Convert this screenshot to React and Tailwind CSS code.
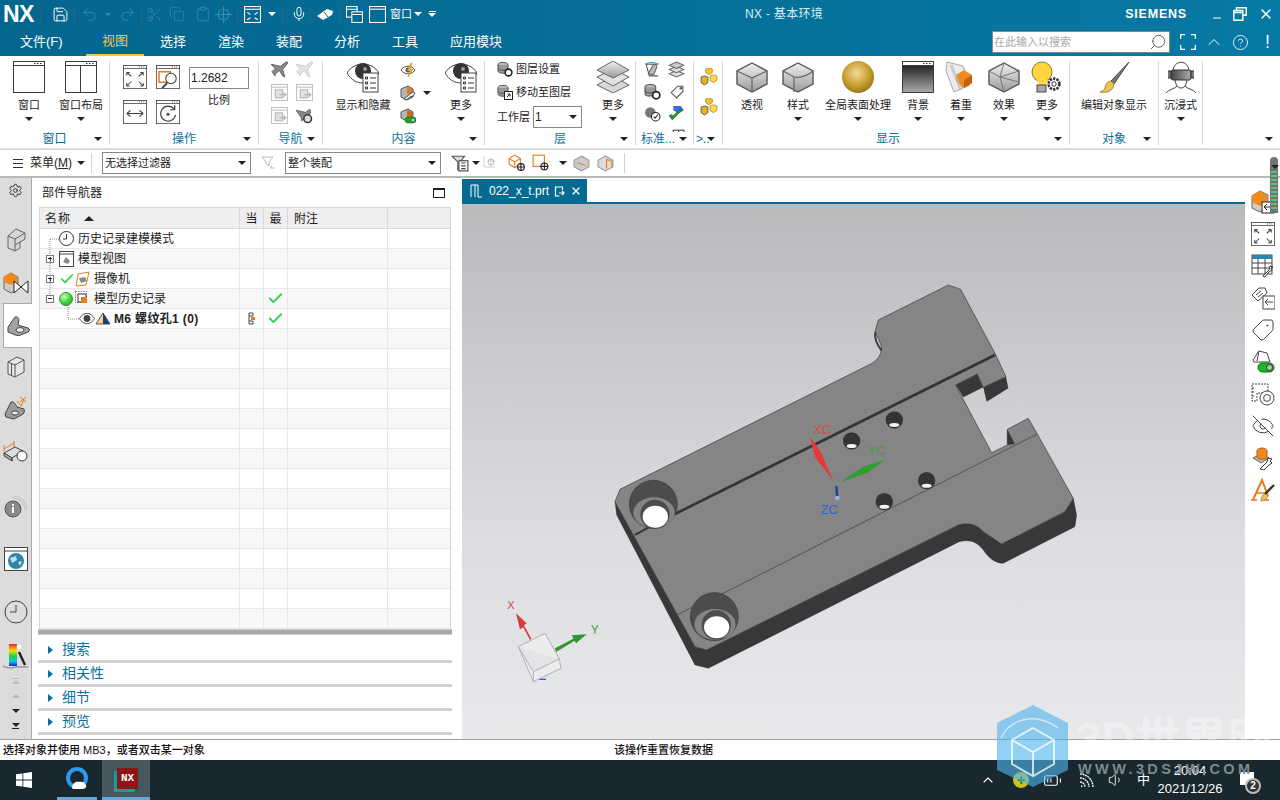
import { Check, Search, Mic, Undo2, Redo2, Save, Copy, Clipboard, Scissors, HelpCircle, ChevronUp, X, Minus, Volume1, BatteryMedium, Tag, EyeOff, Settings } from 'lucide-react'

const caret = 'w-0 h-0 border-l-[4px] border-r-[4px] border-t-[4px] border-l-transparent border-r-transparent border-t-[#222]'

function Caret({ className = '' }) {
  return <span className={`${caret} inline-block shrink-0 ${className}`} />
}

function Svg({ s = 32, vb = 32, children, className = '' }) {
  return <svg width={s} height={s} viewBox={`0 0 ${vb} ${vb}`} className={`shrink-0 ${className}`}>{children}</svg>
}

// window frame with the three dots in the title strip
function Win({ s = 32, children, fill = 'white' }) {
  return (
    <Svg s={s}>
      <rect x="0.5" y="0.5" width="31" height="31" fill={fill} stroke="#3c3c3c" />
      <rect x="0.5" y="0.5" width="31" height="4" fill="white" stroke="#3c3c3c" />
      <path d="M24 2.5h1.5M27 2.5h1.5M21 2.5h1.5" stroke="#333" />
      {children}
    </Svg>
  )
}

function Cube({ s = 32, kind = 'box' }) {
  return (
    <Svg s={s}>
      <path d="M16 2 31 10v13L16 31 1 23V10Z" fill="url(#boxGrad)" stroke="#555" strokeWidth="1.4" />
      {kind === 'box' && <path d="M1 10 16 17l15-7M16 17v14" fill="none" stroke="#666" strokeWidth="1.2" />}
      {kind === 'round' && <path d="M1 10 12 16c6 1 13-1 19-6M12 16v15" fill="none" stroke="#666" strokeWidth="1.2" />}
      {kind === 'facet' && <path d="M16 2 12 16 1 10M12 16 16 31M12 16l19 5M31 10 12 16" fill="none" stroke="#777" strokeWidth="1" />}
    </Svg>
  )
}

function EyeList({ s = 32 }) {
  return (
    <Svg s={s}>
      <path d="M0 12C7 0 25 0 32 12c-4 7-10 10-16 10S4 19 0 12Z" fill="white" stroke="#444" />
      <circle cx="16" cy="10" r="8" fill="#333" />
      <circle cx="18" cy="8" r="2" fill="#999" />
      <rect x="16" y="12" width="15" height="19" fill="white" stroke="#444" />
      <path d="M18.5 16h2v2h-2zM18.5 21h2v2h-2zM18.5 26h2v2h-2z" fill="none" stroke="#333" />
      <path d="M23 17h6M23 22h6M23 27h6" stroke="#333" />
    </Svg>
  )
}

function Layers({ s = 32 }) {
  return (
    <Svg s={s}>
      <path d="M16 15 32 24 16 32 0 24Z" fill="#d8d8d8" stroke="#666" />
      <path d="M16 8 32 16 16 25 0 16Z" fill="#e2e2e2" stroke="#666" />
      <path d="M16 0 32 9 16 17 0 9Z" fill="url(#boxGrad)" stroke="#666" />
    </Svg>
  )
}

function Stack({ s = 16, badge }) {
  return (
    <Svg s={s} vb={16}>
      <ellipse cx="6" cy="4" rx="5" ry="2.6" fill="#bbb" stroke="#555" />
      <path d="M1 4v6c0 3 10 3 10 0V4" fill="#999" stroke="#555" />
      <path d="M1 7c0 3 10 3 10 0" fill="none" stroke="#555" />
      {badge === 'gear' && <circle cx="11.5" cy="11.5" r="3.4" fill="white" stroke="#222" strokeWidth="1.6" />}
      {badge === 'move' && <g><rect x="7.5" y="7.5" width="8" height="8" fill="white" stroke="#222" /><path d="M10 13l3-3M10.5 10H13v2.5" fill="none" stroke="#222" /></g>}
    </Svg>
  )
}

function GoldCubes() {
  return (
    <Svg s={18} vb={16}>
      <path d="M5 1l3-1 3 1v3l-3 2-3-2z" fill="#f6c32c" stroke="#a27a10" strokeWidth=".6" />
      <path d="M9 7l3-1 3 1v4l-3 2-3-2z" fill="#ffd84f" stroke="#a27a10" strokeWidth=".6" />
      <path d="M1 8l3-1 3 1v5l-3 2-3-2z" fill="#e9b21c" stroke="#555" strokeWidth=".8" />
    </Svg>
  )
}

function Plane({ s = 17, gray }) {
  return (
    <Svg s={s} vb={16}>
      <path d="M0 3 9 5l5-4c2-1 2 1 1 2l-4 5 2 7-2-1-3-5-4 3v2l-1-1-2-3 3-3Z" fill={gray ? '#e4e4e4' : '#8a8a8a'} stroke={gray ? '#c0c0c0' : '#444'} strokeWidth=".7" />
    </Svg>
  )
}

// greyed navigation tools: a small window with a mark in it
function Dim({ s = 17 }) {
  return (
    <Svg s={s} vb={16}>
      <rect x=".5" y=".5" width="15" height="15" fill="white" stroke="#c0c0c0" />
      <path d="M.5 3h15" stroke="#c0c0c0" />
      <rect x="4" y="5.500" width="7" height="7.500" fill="#e2e2e2" stroke="#b4b4b4" />
      <path d="M8 10h6M12 8l2 2-2 2" fill="none" stroke="#b4b4b4" />
    </Svg>
  )
}

// ribbon button with the icon over the label
function BigBtn({ w, icon, label, drop = true }) {
  return (
    <div className={`flex flex-col items-center shrink-0 ${w}`}>
      <div className="h-8 flex items-center justify-center">{icon}</div>
      <div className="mt-[4px] h-4 leading-4 text-[11px] text-[#222] whitespace-nowrap">{label}</div>
      {drop && <Caret className="mt-[4px]" />}
    </div>
  )
}

function Group({ w, label, children, line = true, drop = true, className = '', labelClass = 'text-center', dropClass = 'right-[7px]' }) {
  return (
    <div className={`shrink-0 h-[84px] mt-[5px] flex flex-col ${w} ${line ? 'border-r border-[#d8d8d8]' : ''}`}>
      <div className={`h-[71px] flex overflow-hidden ${className}`}>{children}</div>
      <div className="h-[13px] relative">
        <div className={`absolute left-0 right-0 top-0 text-[12px] leading-[15px] text-[#0a6f9b] whitespace-nowrap ${labelClass}`}>{label}</div>
        {drop && <Caret className={`absolute top-[5px] ${dropClass}`} />}
      </div>
    </div>
  )
}

function Ribbon() {
  return (
    <div className="h-[94px] bg-white flex border-b-2 border-[#dcdcdc] shrink-0">
      <Group w="w-[110px]" label="窗口" className="pl-[3px]">
        <BigBtn w="w-[52px]" label="窗口" icon={<Win />} />
        <BigBtn w="w-[52px]" label="窗口布局" icon={<Win><path d="M15.5 4v28" stroke="#3c3c3c" /></Win>} />
      </Group>
      <Group w="w-[149px]" label="操作" className="pl-[13px] pt-[4px]">
        <div className="grid grid-cols-[24px_24px] gap-x-[9px] gap-y-[11px] content-start">
          <Win s={24}><path d="M5 10l6 5M27 10l-6 5M5 28l6-6M27 28l-6-6M5 10h4M5 10v4M27 10h-4M27 10v4M5 28h4M5 28v-4M27 28h-4M27 28v-4" stroke="#444" strokeWidth="1.4" fill="none" /></Win>
          <Win s={24}><rect x="4" y="9" width="15" height="14" fill="none" stroke="#e87b1c" strokeWidth="2" /><circle cx="20" cy="18" r="7" fill="white" stroke="#444" strokeWidth="1.4" /><path d="M15 24l-7 7" stroke="#444" strokeWidth="2.4" /></Win>
          <Win s={24}><path d="M5 18h22M5 18l5-4M5 18l5 4M27 18l-5-4M27 18l-5 4" stroke="#444" strokeWidth="1.4" fill="none" /></Win>
          <Win s={24}><path d="M24 12a10 10 0 1 0 2 8" stroke="#444" strokeWidth="1.6" fill="none" /><path d="M25 7v6h-6" stroke="#444" strokeWidth="1.6" fill="none" /><circle cx="16" cy="19" r="2" fill="#444" /></Win>
        </div>
        <div className="ml-[9px] flex flex-col items-center w-[60px]">
          <div className="w-[60px] h-[22px] mt-[2px] border border-[#888] text-[12px] leading-[20px] pl-[1px] text-[#222]">1.2682</div>
          <div className="mt-[3px] text-[11px] h-4 leading-4 text-[#222]">比例</div>
        </div>
      </Group>
      <Group w="w-[64px]" label="导航" className="pl-[12px]">
        <div className="grid grid-cols-[17px_17px] gap-x-[8px] gap-y-[6px] content-start">
          <Plane />
          <Plane gray />
          <Dim />
          <Dim />
          <Dim />
          <Svg s={17} vb={16}><path d="M0 3 9 5l4-3 1 3-2 3 1 6-4-3-4 2v-3Z" fill="#888" stroke="#444" strokeWidth=".6" /><circle cx="11" cy="11" r="3.6" fill="#ddd" stroke="#333" strokeWidth="1.4" /></Svg>
        </div>
      </Group>
      <Group w="w-[162px]" label="内容" className="pl-[10px]">
        <BigBtn w="w-[60px]" label="显示和隐藏" drop={false} icon={<EyeList />} />
        <div className="ml-[7px] w-[41px] h-[64px] flex items-center">
          <div className="flex flex-col gap-[7px] w-[16px]">
            <Svg s={16} vb={16}><path d="M1 8c3-5 11-5 14 0-3 5-11 5-14 0Z" fill="white" stroke="#555" /><circle cx="8" cy="8" r="2.5" fill="#555" /><path d="M11 1 7 9h3l-2 6 5-8h-3l2-6Z" fill="#f2b91f" stroke="#b57b10" strokeWidth=".5" /></Svg>
            <Svg s={16} vb={16}><path d="M1 4l7-3 5 3v8l-6 3-6-3Z" fill="#b5b5b5" stroke="#555" /><path d="M7 2l5 2v4l-5 1Z" fill="#e87b1c" /><path d="M4 14l6-5 3-2 2 1-2 3-3 1-4 3Z" fill="white" stroke="#333" strokeWidth=".9" /></Svg>
            <Svg s={16} vb={16}><path d="M1 4l7-3 5 3v6l-6 3-6-3Z" fill="#b5b5b5" stroke="#555" /><path d="M7 2l5 2v5l-5 1Z" fill="#d8641a" /><rect x="5" y="9" width="11" height="6" rx="3" fill="#17a81f" stroke="#0a5c10" strokeWidth=".5" /><circle cx="13" cy="12" r="1.8" fill="#ccc" stroke="#333" strokeWidth=".4" /></Svg>
          </div>
          <Caret className="ml-[7px]" />
        </div>
        <BigBtn w="w-[40px]" label="更多" icon={<EyeList />} />
      </Group>
      <Group w="w-[151px]" label="层" className="pl-[12px]">
        <div className="w-[96px] text-[11px] text-[#222] flex flex-col">
          <div className="flex items-center gap-[3px] h-[16px]"><Stack badge="gear" /><span className="whitespace-nowrap">图层设置</span></div>
          <div className="flex items-center gap-[3px] h-[16px] mt-[7px]"><Stack badge="move" /><span className="whitespace-nowrap">移动至图层</span></div>
          <div className="flex items-center h-[22px] mt-[6px]">
            <span className="whitespace-nowrap">工作层</span>
            <div className="ml-[3px] w-[49px] h-[22px] border border-[#888] flex items-center justify-between pl-[1px] pr-[4px] text-[12px]">1<Caret className="border-l-[3.5px] border-r-[3.5px]" /></div>
          </div>
        </div>
        <BigBtn w="w-[40px]" label="更多" icon={<Layers />} />
      </Group>
      <Group w="w-[58px]" label="标准..." className="pl-[8px]" labelClass="text-left pl-[5px]" dropClass="right-[6px]">
        <div className="grid grid-cols-[17px_17px] gap-x-[7px] gap-y-[5px] content-start">
          <Svg s={17} vb={16}><path d="M2 3h11M2 3l3 11h8" fill="none" stroke="#555" /><path d="M4 12 9 3c2 0 3 1 3 3l-3 7Z" fill="#bbb" stroke="#666" /><path d="M1 3c4-2 8-2 13 0" stroke="#2aa0b8" fill="none" /></Svg>
          <Svg s={17} vb={16}><path d="M8 9l7 3-7 3-7-3Z" fill="#ddd" stroke="#666" /><path d="M8 5l7 3-7 3-7-3Z" fill="#ddd" stroke="#666" /><path d="M8 1l7 3-7 3-7-3Z" fill="#ccc" stroke="#666" /></Svg>
          <Stack s={17} badge="gear" />
          <Svg s={17} vb={16}><path d="M3 7l6-6h5v5l-6 6-5-5Z" fill="white" stroke="#555" transform="translate(0 2)" /><circle cx="12" cy="5" r="1.2" fill="#555" /></Svg>
          <Svg s={17} vb={16}><ellipse cx="6" cy="7" rx="5" ry="5" fill="#777" /><circle cx="11" cy="11" r="4" fill="white" stroke="#222" /><path d="M9 11l1.5 1.5L13 9" stroke="#222" fill="none" /></Svg>
          <Svg s={17} vb={16}><path d="M5 1h7l3 4-5 3-5-3Z" fill="#4266e0" /><path d="M1 10l3 4 9-9-2-1-6 6-2-1Z" fill="#1f9a2a" stroke="#125c18" strokeWidth=".5" /></Svg>
          <Svg s={17} vb={16}><path d="M2 10l6-5 6 5v6H2Z" fill="#aaa" stroke="#666" /></Svg>
          <Svg s={17} vb={16}><rect x="5" y="3" width="10" height="13" fill="white" stroke="#444" /><path d="M5 8h10M10 3v13" stroke="#444" /></Svg>
        </div>
      </Group>
      <Group w="w-[29px]" label=">.." className="pl-[6px] pt-[7px]" labelClass="text-left pl-[2px]" dropClass="right-[7px]">
        <div className="flex flex-col gap-[12px]">
          <GoldCubes />
          <GoldCubes />
        </div>
      </Group>
      <Group w="w-[347px]" label="显示" className="pl-[6px]" labelClass="text-left pl-[153px]">
        <BigBtn w="w-[46px]" label="透视" drop={false} icon={<Cube />} />
        <BigBtn w="w-[46px]" label="样式" icon={<Cube kind="round" />} />
        <BigBtn w="w-[74px]" label="全局表面处理" icon={<span className="w-8 h-8 rounded-full bg-[radial-gradient(circle_at_45%_38%,#f2dc93,#c59a2c_50%,#6d5210_100%)]" />} />
        <BigBtn w="w-[46px]" label="背景" icon={<Win fill="url(#blackGrad)" />} />
        <BigBtn w="w-[40px]" label="着重" icon={
          <Svg>
            <path d="M2 1 18 5l7 19-16 7L1 10Z" fill="#ececec" stroke="#aaa" />
            <path d="M11 14 19 9l8 5v8l-9 5-7-7Z" fill="#f08a1e" />
            <path d="M19 27v-8l8-5v8Z" fill="#c85f0c" />
            <path d="M6 4 16 29" stroke="#bbb" strokeWidth="3" opacity=".7" />
          </Svg>
        } />
        <BigBtn w="w-[46px]" label="效果" icon={<Cube kind="facet" />} />
        <BigBtn w="w-[40px]" label="更多" icon={
          <Svg>
            <circle cx="11" cy="11" r="10" fill="#fbd63e" stroke="#8a7a30" />
            <path d="M6 19c1 3 2 3 2 5h7c0-2 1-2 2-5Z" fill="#fbd63e" />
            <rect x="6" y="24" width="9" height="7" fill="#aaa" stroke="#444" />
            <circle cx="23" cy="23" r="5.4" fill="white" stroke="#333" strokeWidth="2.6" strokeDasharray="2.4 1" />
            <circle cx="23" cy="23" r="2.2" fill="white" stroke="#333" />
          </Svg>
        } />
      </Group>
      <Group w="w-[89px]" label="对象">
        <BigBtn w="w-[88px]" label="编辑对象显示" drop={false} icon={
          <Svg>
            <path d="M31 1 13 20l3 3Z" fill="#777" stroke="#333" strokeWidth=".8" />
            <path d="M13 20c-5 1-6 5-6 7 0 2-3 3-5 4 6 1 13 0 14-8Z" fill="#e9c35a" stroke="#96741b" strokeWidth=".8" />
          </Svg>
        } />
      </Group>
      <Group w="w-[44px]" label="" drop={false}>
        <BigBtn w="w-[43px]" label="沉浸式" icon={
          <Svg>
            <path d="M8 11c0-13 16-13 16 0" fill="white" stroke="#444" />
            <rect x="6" y="9" width="20" height="10" rx="2" fill="url(#visorGrad)" stroke="#333" />
            <path d="M3 10h3v7H3M29 10h-3v7h3" fill="#777" stroke="#333" />
            <path d="M10 19c1 6 3 8 6 8s5-2 6-8M12 25c-2 3-8 3-11 7M20 25c2 3 8 3 11 7" fill="none" stroke="#444" />
          </Svg>
        } />
      </Group>
      <Group w="w-[77px]" label="" line={false}>
        <span />
      </Group>
    </div>
  )
}

function QatSep() {
  return <span className="block w-px h-[20px] bg-[#35617a] shrink-0" />
}

function TitleBar() {
  const dim = 'text-[#3f8aa8] shrink-0'
  return (
    <div className="h-[28px] flex items-center text-white shrink-0">
      <div className="w-[745px] shrink-0 flex items-center h-full">
        <span className="ml-[3px] w-[35px] font-bold text-[23px] leading-[28px] tracking-[-0.5px]">NX</span>
        <span className="ml-[3px] mr-[10px]"><QatSep /></span>
        <Save size={17} strokeWidth={1.4} className="shrink-0" />
        <span className="ml-[5px] mr-[6px]"><QatSep /></span>
        <Undo2 size={17} strokeWidth={1.3} className={dim} />
        <span className="ml-[7px] w-0 h-0 border-l-[3px] border-r-[3px] border-t-[3px] border-l-transparent border-r-transparent border-t-[#3f8aa8]" />
        <Redo2 size={17} strokeWidth={1.3} className={`ml-[8px] ${dim}`} />
        <span className="ml-[5px] mr-[4px]"><QatSep /></span>
        <Scissors size={17} strokeWidth={1.2} className={dim} />
        <Copy size={16} strokeWidth={1.2} className={`ml-[6px] ${dim}`} />
        <Clipboard size={16} strokeWidth={1.2} className={`ml-[10px] ${dim}`} />
        <svg width="17" height="17" viewBox="0 0 16 16" className={`ml-[4px] ${dim}`}><circle cx="8" cy="8" r="5" fill="none" stroke="currentColor" /><path d="M8 0v16M0 8h16" stroke="currentColor" /></svg>
        <span className="ml-[5px] mr-[6px]"><QatSep /></span>
        <svg width="17" height="17" viewBox="0 0 16 16" className="shrink-0"><rect x=".5" y=".5" width="15" height="15" fill="none" stroke="white" /><path d="M.5 3h15M3 6l3 2M13 6l-3 2M3 13l3-2M13 13l-3-2" stroke="white" /></svg>
        <Caret className="ml-[7px] border-t-white" />
        <span className="ml-[6px] mr-[8px]"><QatSep /></span>
        <Mic size={16} strokeWidth={1.5} className="shrink-0" />
        <span className="ml-[3px] mr-[5px]"><QatSep /></span>
        <svg width="18" height="14" viewBox="0 0 18 14" className="shrink-0"><path d="M1 9l10-7 6 2-1 4-9 5Z" fill="white" /><path d="M8 5l4 5" stroke="#056b92" /></svg>
        <span className="ml-[5px] mr-[6px]"><QatSep /></span>
        <svg width="17" height="17" viewBox="0 0 16 16" className="shrink-0"><rect x=".5" y=".5" width="10" height="10" fill="#056b92" stroke="white" /><rect x="5.5" y="5.5" width="10" height="10" fill="#056b92" stroke="white" /><path d="M.5 3h10M5.5 8h10" stroke="white" /></svg>
        <svg width="17" height="17" viewBox="0 0 16 16" className="ml-[6px] shrink-0"><rect x=".5" y=".5" width="15" height="15" fill="none" stroke="white" /><path d="M.5 3h15" stroke="white" /></svg>
        <span className="ml-[4px] text-[11px]">窗口</span>
        <Caret className="ml-[2px] border-t-white" />
        <span className="ml-[6px] flex flex-col items-center gap-[1px]"><span className="w-[7px] h-px bg-white" /><Caret className="border-t-white" /></span>
      </div>
      <span className="text-[12px] tracking-[0.3px] text-[#d9ecf4] whitespace-nowrap">NX - 基本环境</span>
      <span className="ml-auto mr-[24px] font-bold text-[12.5px] tracking-[0.8px] [font-family:'Liberation_Sans',sans-serif]">SIEMENS</span>
      <Minus size={12} strokeWidth={2.2} className="mr-[10px] mt-[8px]" />
      <svg width="14" height="14" viewBox="0 0 14 14" className="mr-[11px]"><path d="M3.5 3V.8h9.7v7.5h-3M.8 3.5h9v9.7H.8zM.8 5.5h9" fill="none" stroke="white" strokeWidth="1.4" /></svg>
      <X size={16} strokeWidth={2} className="mr-[6px]" />
    </div>
  )
}

function TabRow() {
  const tabs = ['选择', '渲染', '装配', '分析', '工具']
  return (
    <div className="h-[28px] flex items-center text-white text-[13px] shrink-0">
      <span className="w-[86px] pl-[20px] whitespace-nowrap">文件(F)</span>
      <span className="w-[58px] h-full flex items-center justify-center text-[#f4c64e] border-b-2 border-[#f4c64e]">视图</span>
      {tabs.map(t => <span key={t} className="w-[58px] text-center">{t}</span>)}
      <span className="ml-[16px] whitespace-nowrap">应用模块</span>
      <div className="ml-auto w-[178px] h-[22px] bg-white border border-[#888] flex items-center justify-between pr-[2px]">
        <span className="text-[11px] text-[#a8a8a8] leading-[20px] pl-[1px]">在此输入以搜索</span>
        <Search size={18} strokeWidth={1.2} className="text-[#555] -scale-x-100" />
      </div>
      <svg width="16" height="16" viewBox="0 0 16 16" className="ml-[10px]"><path d="M.7 5V.7H5M11 .7h4.3V5M.7 11v4.3H5M11 15.3h4.3V11" fill="none" stroke="white" strokeWidth="1.2" /></svg>
      <ChevronUp size={20} strokeWidth={1.2} className="ml-[8px]" />
      <HelpCircle size={17} strokeWidth={1.2} className="ml-[8px]" />
      <span className="ml-[16px] mr-[10px] text-[18px] leading-none">!</span>
    </div>
  )
}

function SelectionBar() {
  return (
    <div className="h-[28px] bg-white border-b-2 border-[#b8b8b8] flex items-center shrink-0 text-[11px] text-[#222] relative">
      <span className="ml-[13px] w-[10px] flex flex-col gap-[3px]"><i className="h-px bg-[#333]" /><i className="h-px bg-[#333]" /><i className="h-px bg-[#333]" /></span>
      <span className="ml-[7px] whitespace-nowrap text-[12px]">菜单(<u>M</u>)</span>
      <Caret className="ml-[5px]" />
      <span className="ml-[6px] w-px h-[20px] bg-[#d0d0d0]" />
      <div className="ml-[10px] w-[149px] h-[22px] border border-[#888] flex items-center justify-between pl-[2px] pr-[4px]">无选择过滤器<Caret /></div>
      <svg width="16" height="16" viewBox="0 0 16 16" className="ml-[10px]"><path d="M1 2h11L8 7v4L5 9V7ZM9 13h5M9 13l2-2" fill="none" stroke="#bbb" /></svg>
      <div className="ml-[8px] w-[156px] h-[22px] border border-[#888] flex items-center justify-between pl-[2px] pr-[4px]">整个装配<Caret /></div>
      <svg width="18" height="18" viewBox="0 0 16 16" className="ml-[10px]"><path d="M1 2h11L8 7v7H6V7Z" fill="#ddd" stroke="#555" /><rect x="7" y="6" width="8" height="9" fill="white" stroke="#444" /><path d="M9 8h4M9 10.5h4M9 13h4" stroke="#444" /></svg>
      <Caret className="ml-[3px]" />
      <svg width="16" height="16" viewBox="0 0 16 16" className="ml-[3px]"><path d="M1 1v11h11M4 6h8M8 3v8" stroke="#ccc" fill="none" /><circle cx="8" cy="7" r="3" fill="none" stroke="#bbb" /></svg>
      <svg width="18" height="18" viewBox="0 0 16 16" className="ml-[9px]"><path d="M1 4l5-3 5 3v5l-5 3-5-3Z" fill="#fff" stroke="#e87b1c" /><path d="M1 4l5 3 5-3M6 7v5" stroke="#e87b1c" fill="none" /><circle cx="11.5" cy="11.5" r="3" fill="white" stroke="#222" /><path d="M8 11.5h7M11.5 8v7" stroke="#222" /></svg>
      <svg width="18" height="18" viewBox="0 0 16 16" className="ml-[6px]"><rect x="1" y="1" width="10" height="10" fill="white" stroke="#e87b1c" /><circle cx="11" cy="11" r="3" fill="white" stroke="#222" /><path d="M7.5 11h7M11 7.5v7" stroke="#222" /></svg>
      <Caret className="ml-[9px]" />
      <svg width="17" height="17" viewBox="0 0 16 16" className="ml-[6px]"><path d="M8 1l7 4v6l-7 4-7-4V5Z" fill="#ccc" stroke="#999" /><path d="M4 7l8 3" stroke="#e87b1c" /></svg>
      <svg width="17" height="17" viewBox="0 0 16 16" className="ml-[7px]"><path d="M8 1l7 4v6l-7 4-7-4V5Z" fill="#ddd" stroke="#999" /><path d="M9 4v9M9 4l5 2v6" stroke="#e87b1c" fill="none" /></svg>
      <span className="ml-[10px] w-px h-[20px] bg-[#d0d0d0]" />
    </div>
  )
}

function RailBlock() {
  return (
    <svg width="22" height="24" viewBox="0 0 22 24">
      <path d="M11 1l9 4v6l-5 3v6l-5 3-7-3V8Z" fill="#d6d6d6" stroke="#666" />
      <path d="M3 8l7 3 10-6M10 11v12M10 17l5-3" fill="none" stroke="#666" />
    </svg>
  )
}

function LeftRail() {
  return (
    <div className="w-[32px] shrink-0 bg-[#dcdcdc] border-r border-[#a9a9a9] flex flex-col items-center">
      <div className="h-[24px] flex items-center"><Settings size={15} strokeWidth={1.6} className="text-[#333]" /></div>
      <div className="h-[28px] mt-[24px] flex items-center"><RailBlock /></div>
      <div className="h-[28px] mt-[15px] flex items-center">
        <svg width="26" height="24" viewBox="0 0 26 24"><path d="M1 6l7-4 7 4v12l-7 4-7-4Z" fill="#ccc" stroke="#666" /><path d="M1 5l7-3 6 3v6l-6 3-7-3Z" fill="#f08a1e" /><path d="M11 10l14 12V10L11 22Z" fill="white" stroke="#222" /></svg>
      </div>
      <div className="h-[45px] w-[30px] ml-[3px] mt-[6px] bg-white border border-r-0 border-[#a9a9a9] flex items-center justify-center -mr-px">
        <svg width="25" height="21" viewBox="0 0 25 21"><path d="M2 12 9 2c2-1 4 1 4 3l-1 5 10 3c2 1 2 3 0 4l-10 4-10-4Z" fill="#a2a2a2" stroke="#444" /><ellipse cx="14" cy="15" rx="4" ry="2.400" fill="#eee" stroke="#444" /></svg>
      </div>
      <div className="h-[28px] mt-[5px] flex items-center">
        <svg width="20" height="24" viewBox="0 0 20 24"><path d="M2 7l9-5 7 3v12l-9 5-7-3Z" fill="#e6e6e6" stroke="#555" /><path d="M2 7l7 3 9-5M9 10v12M5.5 8.500v12" fill="none" stroke="#555" /></svg>
      </div>
      <div className="h-[28px] mt-[13px] flex items-center">
        <svg width="24" height="24" viewBox="0 0 24 24"><path d="M1 18 7 6c3-1 5 3 6 5l7 2c1 2 0 4-1 5l-9 5-8-2Z" fill="#9a9a9a" stroke="#444" /><ellipse cx="11" cy="17" rx="3.500" ry="2" fill="#eee" stroke="#444" /><path d="M13 5l4 5 3-7M16 1l6 5M22 1l-6 5" stroke="#e87b1c" fill="none" /></svg>
      </div>
      <div className="h-[28px] mt-[16px] flex items-center">
        <svg width="25" height="24" viewBox="0 0 25 24"><path d="M1 13 12 7l8 4-11 7Z" fill="#ddd" stroke="#444" /><path d="M1 13v3l8 5v-3ZM9 18v3" fill="#aaa" stroke="#444" /><path d="M1 9l10-6M1 5v6M11 1v6" stroke="#e87b1c" fill="none" /><circle cx="19" cy="16" r="5" fill="white" stroke="#333" /></svg>
      </div>
      <div className="h-[28px] mt-[27px] flex items-center">
        <svg width="24" height="24" viewBox="0 0 24 24"><circle cx="9" cy="14" r="8" fill="#8a8a8a" stroke="#555" /><rect x="8" y="12" width="2" height="6" fill="white" /><rect x="8" y="9" width="2" height="2" fill="white" /><path d="M9 3a12 12 0 0 1 12 12M9 1a14 14 0 0 1 14 14" fill="none" stroke="#c2c2c2" /></svg>
      </div>
      <div className="h-[28px] mt-[24px] flex items-center">
        <svg width="24" height="24" viewBox="0 0 24 24"><rect x=".5" y=".5" width="23" height="23" fill="white" stroke="#444" /><path d="M.5 4h23" stroke="#444" /><circle cx="12" cy="14" r="8" fill="#2c86a8" /><path d="M6 11l6-2 1 4-5 3ZM14 15l4-1-2 5Z" fill="#bfe0ea" /></svg>
      </div>
      <div className="h-[28px] mt-[25px] flex items-center">
        <svg width="24" height="24" viewBox="0 0 24 24"><circle cx="12" cy="12" r="11" fill="none" stroke="#444" /><path d="M12 12V5M12 12H6" stroke="#444" /></svg>
      </div>
      <div className="h-[28px] mt-[17px] flex items-center">
        <svg width="28" height="28" viewBox="0 0 28 28">
          <rect x="7" y="1" width="8" height="22" fill="url(#rainbowGrad)" />
          <path d="M1 23c6 3 9 2 13 1l12 0" fill="none" stroke="#777" />
          <path d="M17 9l6 13" stroke="#222" strokeWidth="2.4" />
          <circle cx="17" cy="4" r="2.4" fill="white" />
        </svg>
      </div>
      <div className="mt-[7px] flex flex-col items-center h-[8px]"><span className="w-[7px] h-px bg-[#bbb]" /><Caret className="rotate-180 border-t-[#bbb] mt-px" /></div>
      <div className="mt-[8px] h-[6px] flex"><Caret className="rotate-180 border-t-[#bbb]" /></div>
      <div className="mt-[9px] h-[6px] flex"><Caret /></div>
      <div className="mt-[8px] flex flex-col items-center"><Caret /><span className="w-[7px] h-px bg-[#222] mt-px" /></div>
    </div>
  )
}

const boxClass = 'w-[8px] h-[8px] border border-[#777] bg-white shrink-0 relative'

function PlusBox({ minus }) {
  return (
    <span className={boxClass}>
      <i className="absolute left-[1px] right-[1px] top-[2.5px] h-px bg-[#222]" />
      {!minus && <i className="absolute top-[1px] bottom-[1px] left-[2.5px] w-px bg-[#222]" />}
    </span>
  )
}

const GreenCheck = ({ s = 16 }) => <Check size={s} strokeWidth={2.6} className="text-[#2fd24a] shrink-0" />

function TreeRow({ i, pad, children, cur, last }) {
  const bg = i % 2 ? 'bg-[#f8f8f8]' : 'bg-white'
  return (
    <div className={`grid grid-cols-[200px_24px_24px_100px_1fr] h-[20px] border-b border-[#e8e8e8] ${bg}`}>
      <div className={`flex items-center text-[12px] text-[#222] whitespace-nowrap overflow-hidden border-r border-[#e8e8e8] ${pad}`}>{children}</div>
      <div className="border-r border-[#e8e8e8] flex items-center justify-center">{cur}</div>
      <div className="border-r border-[#e8e8e8] flex items-center justify-center">{last}</div>
      <div className="border-r border-[#e8e8e8]" />
      <div />
    </div>
  )
}

function Tree() {
  const empties = Array.from({ length: 15 }, (_, i) => i + 5)
  return (
    <div className="relative">
      <TreeRow i={0} pad="pl-[19px]">
        <svg width="15" height="15" viewBox="0 0 15 15" className="mr-[4px]"><circle cx="7.5" cy="7.5" r="7" fill="white" stroke="#333" /><path d="M7.5 3v5H4" stroke="#333" fill="none" /></svg>历史记录建模模式
      </TreeRow>
      <TreeRow i={1} pad="pl-[6px]">
        <PlusBox />
        <svg width="15" height="16" viewBox="0 0 15 16" className="ml-[5px] mr-[4px]"><rect x=".5" y=".5" width="14" height="15" fill="white" stroke="#444" /><path d="M.5 3h14" stroke="#444" /><path d="M4 11l3-5 4 4-2 3Z" fill="#888" /></svg>模型视图
      </TreeRow>
      <TreeRow i={2} pad="pl-[6px]">
        <PlusBox />
        <span className="ml-[5px]"><GreenCheck /></span>
        <svg width="15" height="16" viewBox="0 0 15 16" className="mr-[4px]"><path d="M3 3l11-2-3 13-10 1Z" fill="none" stroke="#e87b1c" /><path d="M4 7l6-1 2 4-6 2Z" fill="#888" /></svg>摄像机
      </TreeRow>
      <TreeRow i={3} pad="pl-[6px]" last={<GreenCheck s={17} />}>
        <PlusBox minus />
        <span className="ml-[5px] w-[14px] h-[14px] rounded-full bg-[radial-gradient(circle_at_35%_30%,#c8ffc0,#35d830_55%,#1a9a18)] border border-[#2a9a2a] shrink-0" />
        <svg width="15" height="15" viewBox="0 0 15 15" className="ml-[2px] mr-[4px]"><path d="M.5.5h11v11H.5z" fill="white" stroke="#888" strokeDasharray="1.5 1" /><rect x="3" y="3" width="8" height="8" fill="white" stroke="#333" /><rect x="6" y="6" width="6" height="6" fill="#e87b1c" /></svg>模型历史记录
      </TreeRow>
      <TreeRow
        i={4}
        pad="pl-[39px]"
        cur={<svg width="8" height="13" viewBox="0 0 8 13"><path d="M1 1h4v3H1zM1 9h4v3H1z" fill="white" stroke="#444" /><rect x="3" y="5" width="4" height="3" fill="#e87b1c" /><path d="M1 4v5" stroke="#444" /></svg>}
        last={<GreenCheck s={17} />}
      >
        <svg width="16" height="11" viewBox="0 0 16 11"><path d="M.5 5.500c4-7 11-7 15 0-4 7-11 7-15 0Z" fill="white" stroke="#555" /><circle cx="8" cy="5.500" r="3.400" fill="#444" /></svg>
        <svg width="16" height="13" viewBox="0 0 16 13" className="mr-[3px]"><path d="M8 1 15 12H1Z" fill="#f8d878" stroke="#555" /><path d="M8 1l7 11H8Z" fill="#1d3f82" /></svg>
        <b className="font-bold tracking-[0.35px]">M6 螺纹孔1 (0)</b>
      </TreeRow>
      {empties.map(i => <TreeRow key={i} i={i} pad="" />)}
      {/* dotted connectors of the tree */}
      <svg className="absolute left-0 top-0 pointer-events-none" width="60" height="100">
        <path d="M10 10V66M10 10H19M28 70V90H40" fill="none" stroke="#888" strokeDasharray="1 1" />
      </svg>
    </div>
  )
}

function Accordion({ label }) {
  return (
    <div className="h-[24px] border-b-[3px] border-[#d2d2d2] flex items-center text-[14px] text-[#0a6f9b] ml-[6px] mr-[10px]">
      <span className="ml-[10px] w-0 h-0 border-t-[4.5px] border-b-[4.5px] border-l-[5px] border-t-transparent border-b-transparent border-l-[#0a6f9b]" />
      <span className="ml-[9px]">{label}</span>
    </div>
  )
}

function NavPanel() {
  return (
    <div className="w-[430px] shrink-0 bg-white flex flex-col">
      <div className="h-[29px] flex items-center justify-between pl-[10px] pr-[17px] text-[12px] text-[#222]">
        <span>部件导航器</span>
        <span className="w-[12px] h-[10px] border border-[#222] border-t-2" />
      </div>
      <div className="mx-[7px] w-[412px] border border-[#d8d8d8] border-b-0">
        <div className="grid grid-cols-[200px_24px_24px_100px_1fr] h-[21px] bg-[#eeeeee] border-b border-[#d8d8d8] text-[12px] text-[#222]">
          <div className="flex items-center pl-[5px] pt-px border-r border-[#d8d8d8] tracking-[1px]">名称<span className="ml-[13px] w-0 h-0 border-l-[5px] border-r-[5px] border-b-[5px] border-l-transparent border-r-transparent border-b-[#222]" /></div>
          <div className="flex items-center justify-center pt-px border-r border-[#d8d8d8]">当</div>
          <div className="flex items-center justify-center pt-px border-r border-[#d8d8d8]">最</div>
          <div className="flex items-center pl-[6px] pt-px border-r border-[#d8d8d8]">附注</div>
          <div />
        </div>
        <Tree />
      </div>
      <div className="ml-[6px] mr-[10px] h-[6px] bg-[#a8a8a8] border-y border-[#cfcfcf]" />
      <div className="mt-[4px]">
        <Accordion label="搜索" />
        <Accordion label="相关性" />
        <Accordion label="细节" />
        <Accordion label="预览" />
      </div>
    </div>
  )
}

function Part() {
  const top = 'M60 658 812 282C835 270 848 250 843 225L825 185 835 150 1045 45 1082 58 1185 250 1218 320 1150 352 1132 312 1067 345 1175 548 1222 525 1222 478 1285 445 1312 492 1420 685 1395 725 1205 822 1150 785C1130 762 1105 757 1075 765L320 1140 285 1130 45 695Z'
  const side = 'M45 695 50 735 285 1185 325 1195 1078 815C1110 808 1130 815 1150 840 1170 870 1190 880 1210 880L1425 770 1430 735 1420 685 1395 725 1205 822 1150 785C1130 762 1105 757 1075 765L320 1140 285 1130Z'
  const holes = [[883, 450], [755, 513], [980, 632], [853, 695]]
  return (
    <g transform="translate(138 66) scale(0.3333)">
      <path d={side} fill="#383838" stroke="#2c2c2c" />
      <path d="M1150 352 1218 320 1225 355 1160 395Z" fill="#383838" />
      <path d="M1067 345 1132 312 1150 352 1090 382Z" fill="#383838" />
      <path d={top} fill="#858585" stroke="#3a3a3a" strokeWidth="2" />
      <path d="M1222 478 1245 522 1222 525Z" fill="#383838" />
      <path d="M826 187C822 205 832 225 845 242" fill="none" stroke="#3c3c3c" strokeWidth="6" />
      <path d="M225 732 1185 255" stroke="#343434" strokeWidth="8" />
      <path d="M105 795 150 770" stroke="#343434" strokeWidth="6" />
      <path d="M360 975 1312 492M232 1035 275 1012" stroke="#3a3a3a" strokeWidth="2" />
      <circle cx="160" cy="703" r="72" fill="#4c4c4c" stroke="#3a3a3a" strokeWidth="2" />
      <ellipse cx="162" cy="728" rx="62" ry="46" fill="#858585" />
      <circle cx="165" cy="733" r="44" fill="#4c4c4c" />
      <ellipse cx="166" cy="740" rx="38" ry="33" fill="white" />
      <circle cx="343" cy="1040" r="72" fill="#4c4c4c" stroke="#3a3a3a" strokeWidth="2" />
      <ellipse cx="345" cy="1063" rx="62" ry="46" fill="#858585" />
      <circle cx="349" cy="1065" r="44" fill="#4c4c4c" />
      <ellipse cx="350" cy="1072" rx="38" ry="33" fill="white" />
      {holes.map(([x, y]) => (
        <g key={x}>
          <circle cx={x} cy={y} r="26" fill="#343434" />
          <ellipse cx={x} cy={y + 15} rx="15" ry="6" fill="#f2f2f2" />
        </g>
      ))}
      <path d="M630 500 662 545 700 632 645 562Z" fill="#e33a3a" />
      <path d="M855 570 805 608 720 637 790 590Z" fill="#2f9e2f" />
      <path d="M706 648 712 648 716 685 708 685Z" fill="#1c3c92" />
      <circle cx="712" cy="684" r="7" fill="#8fb8f5" />
      <text x="640" y="492" fontSize="39" fill="#d84a4a">XC</text>
      <text x="802" y="555" fontSize="39" fill="#3f9f3f">YC</text>
      <text x="662" y="732" fontSize="39" fill="#2a62e8">ZC</text>
    </g>
  )
}

function Triad() {
  return (
    <g transform="translate(28 376) scale(0.3333)">
      <path d="M85 200 165 160 208 237 130 275ZM85 200 130 305 213 265 208 237M130 275V305" fill="#ececec" stroke="#b0b0b0" strokeWidth="3" />
      <path d="M120 180 100 142 90 148 78 100 110 130 102 136 124 176Z" fill="#d93a3a" />
      <path d="M195 205 250 176 246 166 290 163 258 190 254 182 198 216Z" fill="#2f952f" />
      <path d="M148 298H168" stroke="#2a62e8" strokeWidth="4" />
      <text x="52" y="88" fontSize="33" fill="#d84a4a">X</text>
      <text x="302" y="162" fontSize="36" fill="#3f9f3f">Y</text>
    </g>
  )
}

function Viewport() {
  return (
    <div className="flex-1 min-w-0 flex flex-col">
      <div className="h-[26px] shrink-0 bg-white border-b-2 border-[#066b92] flex">
        <div className="w-[125px] h-[24px] mt-px bg-[#066b92] flex items-center text-white text-[12px] pl-[8px]">
          <svg width="13" height="14" viewBox="0 0 13 14"><path d="M1 13V1h4v12M5 1h3v12h4" fill="none" stroke="white" /></svg>
          <span className="ml-[6px] whitespace-nowrap">022_x_t.prt</span>
          <svg width="11" height="11" viewBox="0 0 11 11" className="ml-[5px]"><path d="M8.500 4V1h-7v9h4M5 7l5 0M8 5l2 2-2 2" fill="none" stroke="white" strokeWidth="1.200" /></svg>
          <X size={12} strokeWidth={2.6} className="ml-[5px]" />
        </div>
      </div>
      <div className="flex-1 min-h-0 bg-linear-to-b from-[#b8babc] via-[#dcdde0] via-[62%] to-[#e8e9eb]">
        <svg width="783" height="535" viewBox="0 0 783 535" className="[font-family:'Liberation_Sans',sans-serif]">
          <Part />
          <Triad />
        </svg>
      </div>
    </div>
  )
}

function RightRail() {
  return (
    <div className="w-[35px] shrink-0 bg-white flex flex-col items-center pt-[12px] gap-[8px]">
      <svg width="24" height="24" viewBox="0 0 24 24"><path d="M1 6l8-5 8 4v12l-8 5-8-4Z" fill="#ccc" stroke="#666" /><path d="M1 5l8-4 7 4v7l-7 4-8-4Z" fill="#f08a1e" /><rect x="11" y="12" width="12" height="11" fill="white" stroke="#222" /><path d="M21 17h-8M13 17l3-3M13 17l3 3" stroke="#222" fill="none" /></svg>
      <Win s={24}><path d="M5 10l6 5M27 10l-6 5M5 28l6-6M27 28l-6-6M5 10h4M5 10v4M27 10h-4M27 10v4M5 28h4M5 28v-4M27 28h-4M27 28v-4" stroke="#444" strokeWidth="1.4" fill="none" /></Win>
      <svg width="24" height="24" viewBox="0 0 24 24"><rect x="1" y="1" width="20" height="19" fill="white" stroke="#444" /><rect x="1" y="1" width="20" height="4" fill="#2a86a8" /><path d="M1 9h20M1 14h20M7 5v15M14 5v15" stroke="#444" /><path d="M12 22l6-6 1-4 3 1-2 1 1 2-3 2-4 5Z" fill="white" stroke="#333" /></svg>
      <svg width="24" height="24" viewBox="0 0 24 24"><path d="M1 9 8 2h6l2 5-9 8Z" fill="white" stroke="#444" /><path d="M5 9l5-4M7 11l5-4" stroke="#444" /><rect x="12" y="10" width="12" height="13" fill="white" stroke="#444" /><path d="M22 16h-8M14 16l3-3M14 16l3 3" stroke="#444" fill="none" /></svg>
      <Tag size={24} strokeWidth={1} className="text-[#444] -scale-x-100" />
      <svg width="24" height="24" viewBox="0 0 24 24"><path d="M2 10 8 1l8 2 3 9H3Z" fill="white" stroke="#444" /><path d="M8 1l-2 10" stroke="#444" /><rect x="7" y="13" width="16" height="9" rx="4.5" fill="#17b820" stroke="#0d6d13" /><circle cx="18.5" cy="17.500" r="3" fill="#bbb" stroke="#333" /></svg>
      <svg width="24" height="24" viewBox="0 0 24 24"><path d="M1 2h16v9H6v8H1ZM1 6h3M1 10h3M1 14h3" fill="none" stroke="#444" strokeDasharray="2 1" /><circle cx="16" cy="16" r="7" fill="white" stroke="#444" /><circle cx="16" cy="16" r="3.400" fill="none" stroke="#444" /></svg>
      <EyeOff size={24} strokeWidth={1} className="text-[#444]" />
      <svg width="24" height="24" viewBox="0 0 24 24"><path d="M2 12l8-4 8 4-8 5Z" fill="#bbb" stroke="#666" /><ellipse cx="11" cy="5" rx="5" ry="3" fill="#f08a1e" stroke="#b65d0e" /><path d="M6 5v6c0 3 10 3 10 0V5" fill="#f08a1e" stroke="#b65d0e" /><path d="M9 23l7-7 1-4 4 1-2 2 2 2-3 2-5 5Z" fill="white" stroke="#333" /></svg>
      <svg width="24" height="24" viewBox="0 0 24 24"><path d="M2 22 11 2l6 16" fill="none" stroke="#e87b1c" strokeWidth="2" /><path d="M0 22h6M13 22h5M6 15h9" stroke="#e87b1c" strokeWidth="1.6" /><path d="M23 7l-9 9" stroke="#333" strokeWidth="2.400" /><path d="M14 16c-3 1-4 3-4 7 4 0 6-2 7-5Z" fill="#e9c35a" stroke="#96741b" strokeWidth=".6" /></svg>
    </div>
  )
}

function Taskbar() {
  return (
    <div className="h-[40px] shrink-0 bg-[#18282e] flex items-center text-white relative">
      <svg width="16" height="16" viewBox="0 0 16 16" className="ml-[16px]"><path d="M0 2.300 6.500 1.400V7.600H0ZM7.300 1.300 16 0V7.600H7.300ZM0 8.400H6.500V14.600L0 13.700ZM7.300 8.400H16V16L7.300 14.700Z" fill="white" /></svg>
      <div className="ml-[25px] w-[40px] h-full border-b-[3px] border-[#5fa9dc] flex items-center justify-center">
        <svg width="24" height="24" viewBox="0 0 24 24"><circle cx="12" cy="11" r="9" fill="none" stroke="#2b9bf0" strokeWidth="4" /><path d="M7 20c1-5 5-6 7-5 2-1 6 0 7 3s-2 4-4 4H9c-2 0-2-1-2-2Z" fill="white" /></svg>
      </div>
      <div className="ml-[5px] w-[48px] h-full bg-[#47575c] border-b-[3px] border-[#5fa9dc] relative">
        <span className="absolute left-[12px] top-[11px] w-[21px] h-[21px] bg-[#0ba09a]" />
        <span className="absolute left-[15px] top-[8px] w-[21px] h-[21px] bg-[#8c1515] text-white text-[11px] font-bold leading-[21px] text-center [font-family:'Liberation_Mono',monospace]">NX</span>
      </div>
      <div className="ml-auto flex items-center relative h-full">
        <ChevronUp size={16} strokeWidth={1.6} className="mr-[17px]" />
        <span className="w-[16px] h-[16px] rounded-full bg-[#d0c020] flex items-center justify-center text-[#0a7a2a] font-bold text-[14px] leading-none mr-[14px]">+</span>
        <BatteryMedium size={19} strokeWidth={1.4} className="mr-[17px]" />
        <svg width="16" height="16" viewBox="0 0 16 16" className="mr-[13px]"><path d="M2 14a1 1 0 0 1 1 1M1 10a5 5 0 0 1 5 5M1 6a9 9 0 0 1 9 9M1 2a13 13 0 0 1 13 13" fill="none" stroke="white" strokeWidth="1.300" strokeDasharray="2 .6" /></svg>
        <Volume1 size={16} strokeWidth={1.3} className="mr-[13px]" />
        <span className="text-[13px] mr-[2px]">中</span>
        <div className="w-[76px] flex flex-col items-center text-[13px] leading-[18px] [font-family:'Liberation_Sans',sans-serif]">
          <span>20:04</span>
          <span className="whitespace-nowrap">2021/12/26</span>
        </div>
        <div className="relative ml-[12px] mr-[26px] mt-[-4px]">
          <span className="block w-[14px] h-[13px] bg-white" />
          <span className="absolute left-[5px] top-[6px] w-[16px] h-[16px] rounded-full bg-[#333] border-2 border-[#bbb] text-[10px] font-bold text-center leading-[12px] [font-family:'Liberation_Sans',sans-serif]">2</span>
        </div>
      </div>
    </div>
  )
}

export default function App() {
  return (
    <div className="relative w-[1280px] h-[800px] overflow-hidden flex flex-col bg-white [font-family:'Liberation_Sans','Noto_Sans_CJK_SC',sans-serif]">
      <svg className="absolute w-0 h-0">
        <defs>
          <linearGradient id="boxGrad" x1="0" y1="0" x2="0" y2="1"><stop offset="0" stopColor="#f0f0f0" /><stop offset="1" stopColor="#9a9a9a" /></linearGradient>
          <linearGradient id="blackGrad" x1="0" y1="0" x2="0" y2="1"><stop offset="0" stopColor="#111" /><stop offset="1" stopColor="#aaa" /></linearGradient>
          <linearGradient id="visorGrad" x1="0" y1="0" x2="1" y2="0"><stop offset="0" stopColor="#444" /><stop offset="1" stopColor="#aaa" /></linearGradient>
          <linearGradient id="rainbowGrad" x1="0" y1="0" x2="0" y2="1"><stop offset="0" stopColor="#e8281c" /><stop offset=".3" stopColor="#f4e010" /><stop offset=".55" stopColor="#20d040" /><stop offset=".8" stopColor="#10c0e8" /><stop offset="1" stopColor="#1020d0" /></linearGradient>
        </defs>
      </svg>

      <div className="bg-linear-to-r from-[#04668e] to-[#0679a4] shrink-0">
        <TitleBar />
        <TabRow />
      </div>
      <Ribbon />
      <SelectionBar />

      <div className="flex-1 min-h-0 flex">
        <LeftRail />
        <NavPanel />
        <Viewport />
        <RightRail />
      </div>

      <div className="h-[21px] shrink-0 bg-white border-t border-[#a0a0a0] flex items-center text-[11px] text-[#111] font-medium">
        <span className="ml-[3px] w-[611px] whitespace-nowrap">选择对象并使用 MB3，或者双击某一对象</span>
        <span className="whitespace-nowrap">该操作重置恢复数据</span>
      </div>
      <Taskbar />

      {/* slider handle on the right edge */}
      <div className="absolute left-[1270px] top-[157px] w-[8px] h-[56px] rounded-t-[4px] bg-[#6f7472] flex flex-col items-center pt-[14px] gap-[2px]">
        {[0, 1, 2, 3, 4, 5, 6, 7, 8, 9].map(i => <i key={i} className="w-[6px] h-[2px] bg-[#5fc07a]" />)}
      </div>
      <Caret className="absolute left-[1271px] top-[165px]" />

      {/* watermark */}
      <svg width="74" height="86" viewBox="0 0 74 86" className="absolute left-[996px] top-[704px] pointer-events-none">
        <path d="M37 1 72 19V66L37 83 1 66V19Z" fill="#4fb4ee" opacity=".62" />
        <path d="M37 24 58 36V60L37 72 16 60V36ZM16 36 37 48 58 36M37 48V72" fill="none" stroke="white" strokeWidth="2" opacity=".75" />
        <path d="M5 34C15 14 40 8 62 24" fill="none" stroke="white" strokeWidth="1.4" opacity=".6" />
      </svg>
      <span className="absolute left-[1076px] top-[714px] text-[46px] leading-[50px] font-bold text-white/35 whitespace-nowrap pointer-events-none">3D世界网</span>
      <span className="absolute left-[1078px] top-[761px] text-[14.5px] leading-[16px] font-bold tracking-[3.4px] text-[#7f8a8d] whitespace-nowrap pointer-events-none">WWW.3DSJW.COM</span>
    </div>
  )
}
